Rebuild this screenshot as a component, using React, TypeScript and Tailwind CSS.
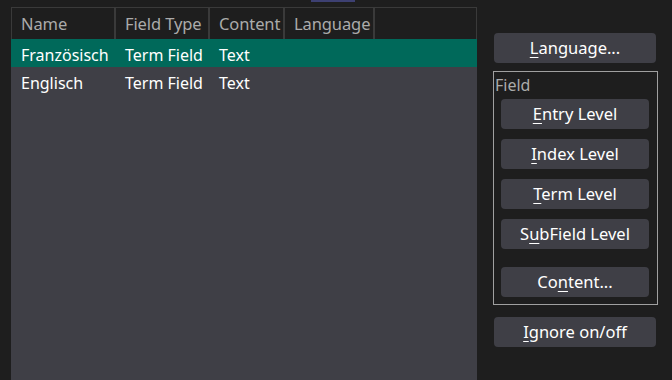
import React from "react";

const font = { fontFamily: '"Noto Sans", "Open Sans", sans-serif' };

function Mn({ pre, u, post }: { pre?: string; u: string; post?: string }) {
  return (
    <span>
      {pre}
      <span className="underline underline-offset-[3px] decoration-1">{u}</span>
      {post}
    </span>
  );
}

function Btn({ children, wide }: { children: React.ReactNode; wide?: boolean }) {
  return (
    <button
      className={
        (wide ? "w-[162px] " : "w-[148px] ") +
        "h-[30px] pt-[1px] rounded-[4px] bg-[#3f3f46] text-white text-[16.5px] leading-none flex items-center justify-center"
      }
    >
      {children}
    </button>
  );
}

const cols = [
  { label: "Name", w: "w-[104px]" },
  { label: "Field Type", w: "w-[94px]" },
  { label: "Content", w: "w-[75px]" },
  { label: "Language", w: "w-[90px]" },
  { label: "", w: "flex-1" },
];

const rows = [
  { name: "Französisch", type: "Term Field", content: "Text", selected: true },
  { name: "Englisch", type: "Term Field", content: "Text", selected: false },
];

export default function App() {
  return (
    <div
      className="relative w-[672px] h-[380px] bg-[#1e1e1e] flex overflow-hidden"
      style={font}
    >
      {/* tab indicator at top edge */}
      <div className="absolute left-[311px] top-0 w-[44px] h-[2px] bg-[#3d4072]" />

      {/* List */}
      <div className="ml-[11px] mt-[7px] w-[466px] h-[373px] bg-[#3f3f46] flex flex-col">
        <div className="flex h-[32px] bg-[#1e1e1e] border border-[#3a3a3a] border-b-0">
          {cols.map((c, i) => (
            <div
              key={i}
              className={
                c.w +
                " h-full flex items-center pl-[9px] pt-[1px] text-[16.5px] tracking-[-0.1px] text-[#ababab] border-r-2 border-[#3a3a3a] last:border-r-0 whitespace-nowrap"
              }
            >
              {c.label}
            </div>
          ))}
        </div>
        {rows.map((r) => (
          <div
            key={r.name}
            className={
              "flex h-[28px] pt-[3px] items-center text-[16px] text-white whitespace-nowrap " +
              (r.selected ? "bg-[#00695a]" : "")
            }
          >
            <div className="w-[105px] pl-[10px]">{r.name}</div>
            <div className="w-[94px] pl-[9px]">{r.type}</div>
            <div className="w-[80px] pl-[9px]">{r.content}</div>
          </div>
        ))}
      </div>

      {/* Right panel */}
      <div className="ml-[16px] flex flex-col items-start">
        <div className="mt-[33px] ml-[1px]">
          <Btn wide>
            <Mn u="L" post="anguage..." />
          </Btn>
        </div>
        <div className="mt-[8px] w-[165px] h-[234px] border border-[#a0a0a0] flex flex-col">
          <div className="pl-[1px] pt-[4px] text-[16px] leading-[18px] text-[#ababab]">Field</div>
          <div className="flex flex-col gap-[10px] pl-[7px] mt-[5px]">
            <Btn>
              <Mn u="E" post="ntry Level" />
            </Btn>
            <Btn>
              <Mn u="I" post="ndex Level" />
            </Btn>
            <Btn>
              <Mn u="T" post="erm Level" />
            </Btn>
            <Btn>
              <Mn pre="S" u="u" post="bField Level" />
            </Btn>
          </div>
          <div className="pl-[7px] mt-[18px]">
            <Btn>
              <Mn pre="Co" u="n" post="tent..." />
            </Btn>
          </div>
        </div>
        <div className="mt-[12px] ml-[1px]">
          <Btn wide>
            <Mn u="I" post="gnore on/off" />
          </Btn>
        </div>
      </div>
    </div>
  );
}
